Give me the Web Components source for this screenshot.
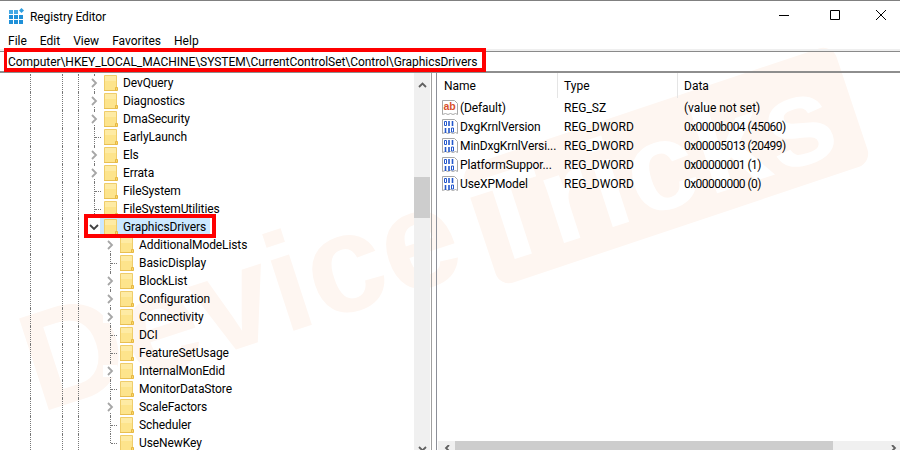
<!DOCTYPE html>
<html>
<head>
<meta charset="utf-8">
<style>
  html, body { margin: 0; height: 100%; background: #fff; overflow: hidden; }
  body { font: 12px Roboto, "Liberation Sans", sans-serif; color: #000; }
</style>
</head>
<body>
<registry-window>
  <reg-tree slot="tree"></reg-tree>
  <reg-values slot="values"></reg-values>
</registry-window>

<script>
const FOLDER = `<svg width="16" height="16" viewBox="0 0 16 16">
  <path d="M1.5 .5h12v15h-12z" fill="#fde48c" stroke="#efcd6b"/>
  <path d="M2 1h11v5H2z" fill="#fff0b8" opacity=".55"/>
  <path d="M1 15.5h13" stroke="#e8bf52"/>
  <path d="M12.5 15.5v-3h2v3z" fill="#fbd76c" stroke="#e6b842"/>
</svg>`;

class RegistryWindow extends HTMLElement {
  constructor() {
    super();
    this.attachShadow({ mode: 'open' });
    this.shadowRoot.innerHTML = `
      <style>
        :host { display: flex; flex-direction: column; width: 900px; height: 450px; position: relative; overflow: hidden; isolation: isolate; }
        .top-edge { height: 1px; background: #808080; flex: none; }
        .title { height: 30px; flex: none; display: flex; align-items: center; padding-left: 9px; gap: 6px; }
        .title span { flex: 1; padding-top: 1px; letter-spacing: -.1px; }
        .caps { display: flex; align-self: flex-start; margin: -1px -4px 0 0; }
        .caps svg { display: block; width: 46px; height: 30px; }
        .menu { height: 19px; flex: none; display: flex; gap: 13px; padding: 1px 0 0 8px; align-items: center; box-sizing: border-box; }
        .addr { height: 22px; flex: none; box-sizing: border-box; border-top: 1px solid #8a8a8a; border-bottom: 2px solid #8e8e8e; box-shadow: 0 -2px 0 #efefef; padding-left: 8px; line-height: 20px; white-space: nowrap; margin-top: 1px; letter-spacing: -.05px; }
        .body { flex: 1; display: flex; min-height: 0; }
        .left { width: 414px; flex: none; overflow: hidden; }
        .vbar { width: 16px; flex: none; background: #f0f0f0; display: flex; flex-direction: column; align-items: center; padding-top: 9px; box-sizing: border-box; }
        .vbar .thumb { width: 16px; height: 41px; margin-top: 89px; background: #cdcdcd; }
        .vbar .grow { flex: 1; }
        .vbar svg { flex: none; display: block; }
        .vbar svg:last-child { margin-bottom: -2px; }
        .split { width: 6px; margin-left: 1px; flex: none; box-sizing: border-box; border-left: 1px solid #a0a0a0; border-right: 1px solid #8c8f98; }
        .right { flex: 1; min-width: 0; display: flex; flex-direction: column; }
        .right .pane { flex: 1; min-height: 0; }
        .hbar { height: 9px; flex: none; background: #f0f0f0; margin-left: 1px; display: flex; align-items: flex-start; }
        .hbar .thumb { width: 378px; height: 9px; background: #cdcdcd; flex: none; }
        .hbar svg { display: block; flex: none; margin-top: 4px; }
        .mark { position: absolute; left: 0; top: 0; width: 900px; height: 450px; z-index: -1; }
        .red { position: absolute; border: 4px solid #f00; box-sizing: border-box; }
        .red.addr-box { left: 4px; top: 48px; width: 482px; height: 24px; border-left-width: 3px; }
        .red.key-box { left: 84px; top: 214px; width: 132px; height: 24px; }
      </style>
      <svg class="mark" viewBox="0 0 900 450" aria-hidden="true" font-family="Liberation Sans" font-weight="700">
        <text transform="translate(40 413) rotate(-18)" font-size="140" fill="#fef6f1">Device</text>
        <rect x="470" y="103" width="392" height="125" rx="14" transform="rotate(-18.5 666 165)" fill="#fef6f1"/>
        <text transform="translate(487 268) rotate(-18)" font-size="125" textLength="375" fill="#fff">Tricks</text>
      </svg>
      <div class="top-edge"></div>
      <div class="title">
        <svg width="15" height="16" viewBox="0 0 15 16" style="margin-top:-1px">
          <g fill="#1f90d8">
            <path d="M0 2h4v4H0zM5 2h4v4H5z" fill="#45a9e4"/>
            <path d="M0 7h4v4H0zM5 7h4v4H5zM10 7h4v4h-4zM0 12h4v4H0zM5 12h4v4H5zM10 12h4v4h-4z"/>
          </g>
          <path d="M12.5 0l2.5 2.5-2.5 2.5L10 2.5z" fill="#2f9fe0"/>
        </svg>
        <span>Registry Editor</span>
        <div class="caps">
          <svg viewBox="0 0 46 30"><path d="M13 15.5h10" stroke="#000"/></svg>
          <svg viewBox="0 0 46 30"><path d="M18.5 10.5h9v9h-9z" fill="none" stroke="#000"/></svg>
          <svg viewBox="0 0 46 30"><path d="M18 10l10 10M28 10l-10 10" stroke="#000" fill="none"/></svg>
        </div>
      </div>
      <div class="menu"><span>File</span><span>Edit</span><span>View</span><span>Favorites</span><span>Help</span></div>
      <div class="addr">Computer\\HKEY_LOCAL_MACHINE\\SYSTEM\\CurrentControlSet\\Control\\GraphicsDrivers</div>
      <div class="body">
        <div class="left"><slot name="tree"></slot></div>
        <div class="vbar">
          <svg width="9" height="6" viewBox="0 0 9 6"><path d="M1 5l3.5-3.5L8 5" fill="none" stroke="#606060" stroke-width="1.8"/></svg>
          <div class="thumb"></div>
          <div class="grow"></div>
          <svg width="9" height="6" viewBox="0 0 9 6"><path d="M1 1l3.5 3.5L8 1" fill="none" stroke="#606060" stroke-width="1.8"/></svg>
        </div>
        <div class="split"></div>
        <div class="right">
          <div class="pane"><slot name="values"></slot></div>
          <div class="hbar">
            <svg width="17" height="6" viewBox="0 0 17 6"><path d="M11 0L8 3 11 6" fill="none" stroke="#606060" stroke-width="1.8"/></svg>
            <div class="thumb"></div>
            <div style="flex:1"></div>
            <svg width="12" height="6" viewBox="0 0 12 6"><path d="M4 0l3 3-3 3" fill="none" stroke="#606060" stroke-width="1.8"/></svg>
          </div>
        </div>
      </div>
      <div class="red addr-box"></div>
      <div class="red key-box"></div>
    `;
  }
}

class TreeRow extends HTMLElement {
  constructor() {
    super();
    this.attachShadow({ mode: 'open' });
  }

  connectedCallback() {
    const level = Number(this.getAttribute('level') || 0);
    const kind = this.getAttribute('kind') || 'leaf';
    const sel = this.hasAttribute('selected');
    const x = 94 + level * 16;
    let toggle = '';
    if (kind === 'closed') {
      toggle = `<svg width="7" height="10" viewBox="0 0 7 10"><path d="M1 1l4 4-4 4" fill="none" stroke="#a6a6a6" stroke-width="1.8"/></svg>`;
    } else if (kind === 'open') {
      toggle = `<svg width="10" height="7" viewBox="0 0 10 7"><path d="M1 1l4 4 4-4" fill="none" stroke="#404040" stroke-width="1.8"/></svg>`;
    }
    const own = kind === 'open' ? '' : `<i class="guide" style="left:${x}px"></i>`;
    const last = this.hasAttribute('last');
    this.shadowRoot.innerHTML = `
      <style>
        :host { display: block; height: 18px; }
        .row { display: flex; align-items: center; height: 18px; position: relative; padding-left: ${87 + level * 16}px; }
        .guide { position: absolute; top: 0; bottom: 0; width: 0; border-left: 1px dotted #777; }
        .guide.half { bottom: 9px; }
        .dots { position: absolute; top: 9px; width: 6px; height: 0; border-top: 1px dotted #777; }
        .tog { width: 14px; height: 12px; margin-right: 2px; flex: none; display: flex; justify-content: center; align-items: center; position: relative; }
        .tog.on { background: #fff; }
        .ico { width: 16px; height: 16px; flex: none; margin-right: 4px; }
        .ico svg { display: block; }
        .txt { white-space: nowrap; letter-spacing: -.1px; }
        .lab { display: flex; align-items: center; height: 18px; position: relative; }
        .lab.sel { background: #cce8ff; margin-left: -3px; padding: 0 4px 0 3px; }
      </style>
      <div class="row">
        <i class="guide" style="left:30px"></i><i class="guide" style="left:62px"></i><i class="guide" style="left:78px"></i>
        ${last ? `<i class="guide half" style="left:${x}px"></i>` : own}
        ${kind === 'leaf' ? `<i class="dots" style="left:${x + 1}px"></i>` : ''}
        <span class="tog ${toggle ? 'on' : ''}">${toggle}</span>
        <span class="lab ${sel ? 'sel' : ''}">
          <span class="ico">${FOLDER}</span><span class="txt"><slot></slot></span>
        </span>
      </div>
    `;
  }
}

class RegTree extends HTMLElement {
  constructor() {
    super();
    this.attachShadow({ mode: 'open' });
    const rows = [
      ['DevQuery', 0, 'closed'], ['Diagnostics', 0, 'closed'], ['DmaSecurity', 0, 'closed'],
      ['EarlyLaunch', 0, 'leaf'], ['Els', 0, 'closed'], ['Errata', 0, 'closed'],
      ['FileSystem', 0, 'leaf'], ['FileSystemUtilities', 0, 'leaf'], ['GraphicsDrivers', 0, 'open', true],
      ['AdditionalModeLists', 1, 'closed'], ['BasicDisplay', 1, 'leaf'], ['BlockList', 1, 'closed'],
      ['Configuration', 1, 'closed'], ['Connectivity', 1, 'closed'], ['DCI', 1, 'leaf'],
      ['FeatureSetUsage', 1, 'leaf'], ['InternalMonEdid', 1, 'closed'], ['MonitorDataStore', 1, 'leaf'],
      ['ScaleFactors', 1, 'closed'], ['Scheduler', 1, 'leaf'], ['UseNewKey', 1, 'leaf'],
    ];
    this.shadowRoot.innerHTML = `
      <style>:host { display: block; padding-top: 1px; }</style>
      ${rows.map(([name, level, kind, sel], i) => `<tree-row level="${level}" kind="${kind}" ${sel ? 'selected' : ''} ${i === rows.length - 1 ? 'last' : ''}>${name}</tree-row>`).join('')}
    `;
  }
}

class RegValues extends HTMLElement {
  constructor() {
    super();
    this.attachShadow({ mode: 'open' });
    const page = `<path d="M.5 .5h12l3 3v11l-2-1-2.5 1-2.5-1-2.5 1-2.5-1-3 1z" fill="#fff" stroke="#a8a8a8"/>`;
    const ab = `<svg width="16" height="16" viewBox="0 0 16 16">${page}<text x="1.5" y="10" font-family="Liberation Sans" font-weight="700" font-size="10.5" fill="#d8502c">ab</text></svg>`;
    const bin = `<svg width="16" height="16" viewBox="0 0 16 16">${page}
      <g fill="none" stroke="#2458cc"><path d="M2.5 2.5h2v4h-2zM9.5 9h2v4h-2z"/><path d="M7 2v5M10.5 2v5M3.5 9v5M7 9v5" stroke-width="1.6"/></g></svg>`;
    const rows = [
      [ab, '(Default)', 'REG_SZ', '(value not set)', 0],
      [bin, 'DxgKrnlVersion', 'REG_DWORD', '0x0000b004 (45060)', 1],
      [bin, 'MinDxgKrnlVersi...', 'REG_DWORD', '0x00005013 (20499)', 1],
      [bin, 'PlatformSuppor...', 'REG_DWORD', '0x00000001 (1)', 1],
      [bin, 'UseXPModel', 'REG_DWORD', '0x00000000 (0)', 1],
    ];
    this.shadowRoot.innerHTML = `
      <style>
        :host { display: block; }
        .head, .row { display: grid; grid-template-columns: 121px 120px 1fr; }
        .head { height: 25px; align-items: start; }
        .head span { padding-left: 6px; height: 25px; line-height: 26px; border-right: 1px solid #e5e5e5; }
        .head span:first-child { padding-left: 7px; }
        .head span:last-child { border-right: 0; }
        .row { height: 19px; align-items: center; }
        .name { display: flex; align-items: center; gap: 2px; padding-left: 5px; white-space: nowrap; letter-spacing: -.1px; }
        .name svg { flex: none; }
        .type, .data { padding-left: 6px; white-space: nowrap; }
        .hex { letter-spacing: -.56px; }
      </style>
      <div class="head"><span>Name</span><span>Type</span><span>Data</span></div>
      ${rows.map(([icon, name, type, data, hex]) => `<div class="row"><div class="name">${icon}<span>${name}</span></div><div class="type">${type}</div><div class="data ${hex ? 'hex' : ''}">${data}</div></div>`).join('')}
    `;
  }
}

customElements.define('registry-window', RegistryWindow);
customElements.define('tree-row', TreeRow);
customElements.define('reg-tree', RegTree);
customElements.define('reg-values', RegValues);
</script>
</body>
</html>
